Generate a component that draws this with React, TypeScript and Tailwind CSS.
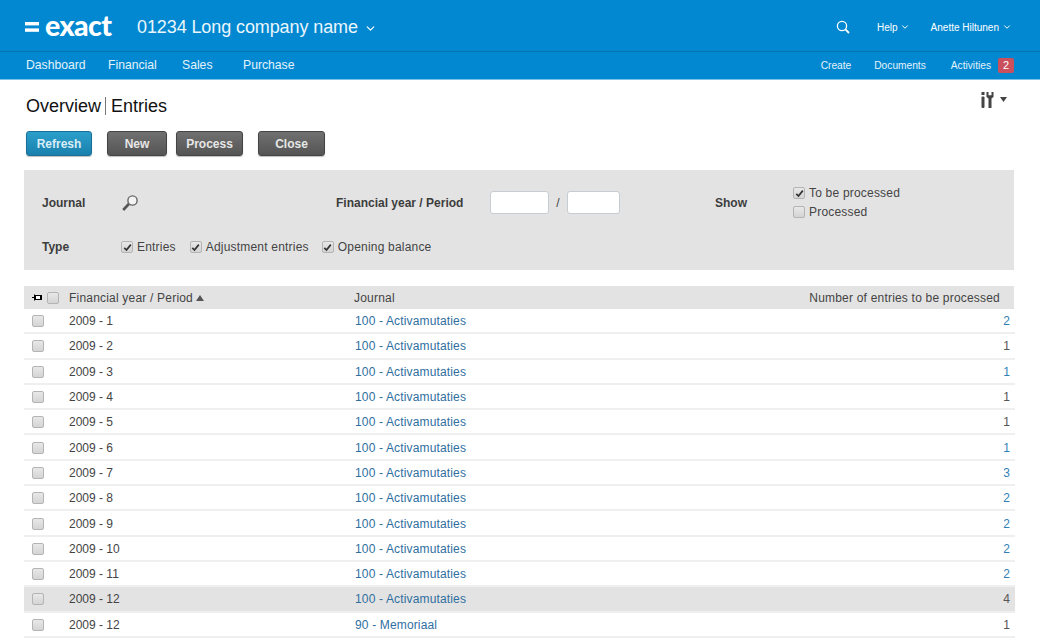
import { ChevronDown } from 'lucide-react';

const rows = [
  { period: '2009 - 1', journal: '100 - Activamutaties', count: 2, link: true },
  { period: '2009 - 2', journal: '100 - Activamutaties', count: 1 },
  { period: '2009 - 3', journal: '100 - Activamutaties', count: 1, link: true },
  { period: '2009 - 4', journal: '100 - Activamutaties', count: 1 },
  { period: '2009 - 5', journal: '100 - Activamutaties', count: 1 },
  { period: '2009 - 6', journal: '100 - Activamutaties', count: 1, link: true },
  { period: '2009 - 7', journal: '100 - Activamutaties', count: 3, link: true },
  { period: '2009 - 8', journal: '100 - Activamutaties', count: 2, link: true },
  { period: '2009 - 9', journal: '100 - Activamutaties', count: 2, link: true },
  { period: '2009 - 10', journal: '100 - Activamutaties', count: 2, link: true },
  { period: '2009 - 11', journal: '100 - Activamutaties', count: 2, link: true },
  { period: '2009 - 12', journal: '100 - Activamutaties', count: 4, active: true },
  { period: '2009 - 12', journal: '90 - Memoriaal', count: 1 },
];

function Check({ checked = false }: { checked?: boolean }) {
  return (
    <span className="flex h-[12px] w-[12px] shrink-0 items-center justify-center rounded-[2px] border border-[#b4b4b4] bg-gradient-to-b from-[#e8e8e8] to-[#d4d4d4]">
      {checked && (
        <svg width="9" height="9" viewBox="0 0 9 9">
          <path d="M1.3 4.8 3.5 7 7.8 1.6" fill="none" stroke="#333" strokeWidth="1.7" />
        </svg>
      )}
    </span>
  );
}

function Option({ label, checked }: { label: string; checked?: boolean }) {
  return (
    <span className="flex items-center gap-[4px] tracking-[0.2px]">
      <Check checked={checked} />
      <span>{label}</span>
    </span>
  );
}

function Btn({ label, blue, className = '' }: { label: string; blue?: boolean; className?: string }) {
  return (
    <button
      className={
        'h-[25px] rounded-[3px] border text-[12px] font-bold shadow-[0_1px_1px_rgba(0,0,0,0.25)] ' +
        (blue
          ? 'border-[#1a6f96] bg-gradient-to-b from-[#2b9fcb] to-[#1a80ad] text-[#d9edf5] '
          : 'border-[#444] bg-gradient-to-b from-[#707070] to-[#555] text-[#e6e6e6] ') +
        className
      }
    >
      {label}
    </button>
  );
}

export default function App() {
  return (
    <div className="h-[640px] w-[1040px] overflow-hidden bg-white font-['Liberation_Sans',Arial,sans-serif] text-[12px] text-[#444]">
      <header className="flex h-[52px] items-center border-b border-[#0674b0] bg-[#0288d1] pt-[3px] text-white">
        <div className="ml-[25px] flex w-[112px] items-center">
          <svg width="14" height="10" viewBox="0 0 14 10" className="mr-[6px]">
            <rect width="14" height="3.4" y="0" fill="#fff" />
            <rect width="14" height="3.4" y="6.4" fill="#fff" />
          </svg>
          <span className="-mt-[3px] font-['Lato',sans-serif] text-[28.5px] font-black leading-none tracking-[-0.6px]">exact</span>
        </div>
        <span className="text-[18px] tracking-[-0.1px] text-[#eaf6fc]">01234 Long company name</span>
        <ChevronDown size={13} strokeWidth={2.2} className="ml-[6px] mt-[2px]" />
        <div className="ml-auto flex items-center text-[10px]">
          <svg width="14" height="14" viewBox="0 0 14 14" className="mr-[27px]">
            <circle cx="6" cy="6" r="4.6" fill="none" stroke="#fff" strokeWidth="1.3" />
            <path d="m9.4 9.4 3.6 3.6" stroke="#fff" strokeWidth="1.8" />
          </svg>
          <span>Help</span>
          <ChevronDown size={10} strokeWidth={2.4} className="ml-[2px] mr-[21px]" />
          <span>Anette Hiltunen</span>
          <ChevronDown size={10} strokeWidth={2.4} className="ml-[3px] mr-[28px]" />
        </div>
      </header>
      <nav className="flex h-[28px] items-center border-b border-[#7cc0e8] bg-[#0288d1] pl-[26px] text-[12.2px] text-[#e4f3fb]">
        <span className="w-[82px]">Dashboard</span>
        <span className="w-[74px]">Financial</span>
        <span className="w-[61px]">Sales</span>
        <span>Purchase</span>
        <div className="ml-auto flex items-center text-[10.2px]">
          <span className="mr-[23px]">Create</span>
          <span className="mr-[25px]">Documents</span>
          <span>Activities</span>
          <span className="ml-[7px] mr-[26px] flex h-[15px] w-[16px] items-center justify-center rounded-[2px] bg-[#c9505c] text-[11px] text-white">2</span>
        </div>
      </nav>

      <div className="flex h-[51px] px-[26px]">
        <div className="mt-[16px] flex h-[20px] items-center text-[18px] text-[#111]">
          <span>Overview</span>
          <span className="mx-[4px] mr-[5px] h-[18px] w-px bg-[#777]" />
          <span>Entries</span>
        </div>
        <div className="ml-auto mr-[7px] mt-[11px] flex h-[20px] items-start">
          <svg width="15" height="18" viewBox="0 0 15 18" fill="#444">
            <rect x="0.5" y="1" width="3" height="3" />
            <rect x="0.5" y="5.5" width="3" height="11.5" rx="1" />
            <path d="M5.5 1h2v3.2h3V1h2v5l-2 1.6V17H7.5V7.6L5.5 6z" />
          </svg>
          <svg width="7" height="5" viewBox="0 0 7 5" className="ml-[4px] mt-[6px]">
            <path d="M0 0h7L3.5 5z" fill="#444" />
          </svg>
        </div>
      </div>

      <div className="flex px-[26px]">
        <Btn label="Refresh" blue className="w-[66px]" />
        <Btn label="New" className="ml-[15px] w-[60px]" />
        <Btn label="Process" className="ml-[9px] w-[67px]" />
        <Btn label="Close" className="ml-[15px] w-[67px]" />
      </div>

      <section className="ml-[24px] mt-[14px] h-[100px] w-[990px] bg-[#e3e3e3] pl-[18px]">
        <div className="flex h-[65px] items-center">
          <b className="w-[79px] text-[#3d3d3d]">Journal</b>
          <svg width="18" height="18" viewBox="0 0 18 18" className="mr-[197px]">
            <circle cx="11.5" cy="6.5" r="4.6" fill="#f4f4f4" stroke="#666" strokeWidth="1.4" />
            <path d="m7.8 10 -5.6 6" stroke="#555" strokeWidth="2.6" />
          </svg>
          <b className="w-[154px] text-[#3d3d3d]">Financial year / Period</b>
          <span className="h-[23px] w-[59px] rounded-[3px] border border-[#c6ccd2] bg-white" />
          <span className="w-[18px] text-center">/</span>
          <span className="h-[23px] w-[53px] rounded-[3px] border border-[#c6ccd2] bg-white" />
          <b className="ml-[95px] w-[78px] text-[#3d3d3d]">Show</b>
          <div className="flex flex-col gap-[1px]">
            <Option label="To be processed" checked />
            <Option label="Processed" />
          </div>
        </div>
        <div className="flex items-center pt-[3px]">
          <b className="w-[79px] text-[#3d3d3d]">Type</b>
          <Option label="Entries" checked />
          <span className="w-[14px]" />
          <Option label="Adjustment entries" checked />
          <span className="w-[13px]" />
          <Option label="Opening balance" checked />
        </div>
      </section>

      <div className="ml-[24px] mt-[16px] w-[991px]">
        <div className="flex h-[23px] w-[990px] items-center bg-[#e3e3e3] tracking-[0.2px]">
          <svg width="11" height="7" viewBox="0 0 11 7" className="ml-[8px] mr-[4px]">
            <path d="M0 3.5h2.5M2.5 0.5v6" fill="none" stroke="#000" strokeWidth="1" />
            <rect x="3.5" y="1.5" width="5" height="4" fill="#fff" stroke="#000" strokeWidth="1" />
            <rect x="8.5" y="1" width="1.5" height="5" fill="#000" />
          </svg>
          <Check />
          <span className="ml-[10px] flex w-[285px] items-center">
            Financial year / Period
            <svg width="8" height="6" viewBox="0 0 8 6" className="ml-[3px]">
              <path d="M4 0 8 6H0z" fill="#555" />
            </svg>
          </span>
          <span>Journal</span>
          <span className="ml-auto mr-[14px]">Number of entries to be processed</span>
        </div>
        {rows.map((row, i) => (
          <div
            key={i}
            className={
              'flex h-[25.3px] items-center border-b-2 border-[#efefef] pt-[1px] ' +
              (row.active ? 'bg-[#e3e3e3]' : 'bg-white')
            }
          >
            <span className="ml-[8px]"><Check /></span>
            <span className="ml-[25px] w-[286px]">{row.period}</span>
            <span className="tracking-[0.15px] text-[#2f6f9f]">{row.journal}</span>
            <span className={'ml-auto mr-[5px] ' + (row.link ? 'text-[#2f7fb5]' : 'text-[#555]')}>{row.count}</span>
          </div>
        ))}
      </div>
    </div>
  );
}
